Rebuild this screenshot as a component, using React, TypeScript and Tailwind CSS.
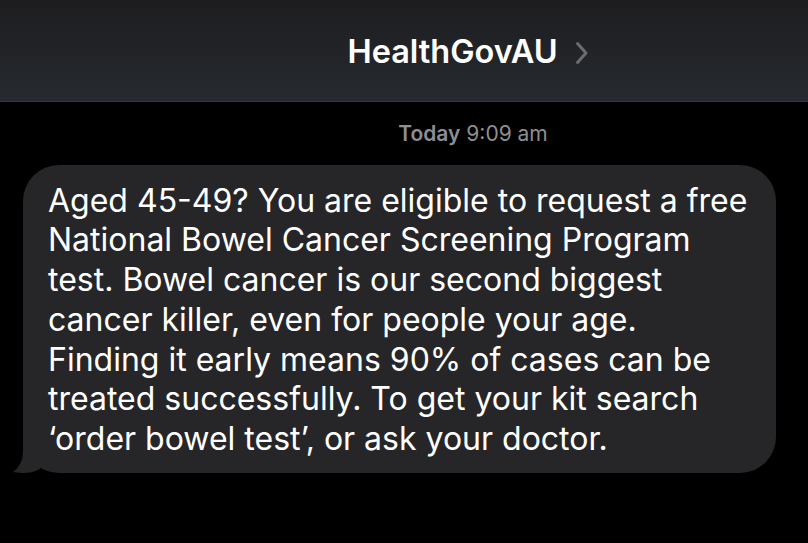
import React from "react";

const lines = [
  "Aged 45-49? You are eligible to request a free",
  "National Bowel Cancer Screening Program",
  "test. Bowel cancer is our second biggest",
  "cancer killer, even for people your age.",
  "Finding it early means 90% of cases can be",
  "treated successfully. To get your kit search",
  "\u2018order bowel test\u2019, or ask your doctor.",
];

const Chevron = () => (
  <svg width="14" height="24" viewBox="0 0 14 24" fill="none">
    <path
      d="M2.5 2.5 L11 12 L2.5 21.5"
      stroke="#6c6c70"
      strokeWidth="3"
      strokeLinecap="round"
      strokeLinejoin="round"
    />
  </svg>
);

const Tail = () => (
  <svg
    className="absolute bottom-0 left-[-11px]"
    width="40"
    height="40"
    viewBox="0 0 40 40"
  >
    <path d="M11 0 L31 0 L31 33 Q25 40 12 40 Q8 40 1 39 Q11 32 11 18 Z" fill="#262628" />
  </svg>
);

export default function App() {
  return (
    <div
      className="h-[543px] w-[808px] overflow-hidden bg-black text-white"
      style={{ fontFamily: "Inter, 'Noto Sans', sans-serif" }}
    >
      <header className="flex h-[102px] items-center justify-center gap-[17px] border-b border-[#33363c] bg-gradient-to-b from-[#1d1d1f] to-[#262a30] pl-[128px] pt-[4px]">
        <span className="text-[32.5px] font-semibold">HealthGovAU</span>
        <Chevron />
      </header>

      <div className="mt-[16px] pl-[138px] text-center text-[21px] text-[#8e8e93]">
        <span className="font-semibold">Today</span> 9:09 am
      </div>

      <div className="relative ml-[23px] mt-[15px] w-[753px] rounded-[36px] bg-[#262628] pb-[14px] pl-[25px] pr-[20px] pt-[16px]">
        <Tail />
        <p className="relative text-[32px] leading-[39.8px]">
          {lines.map((l) => (
            <span key={l} className="block whitespace-nowrap">
              {l}
            </span>
          ))}
        </p>
      </div>
    </div>
  );
}
